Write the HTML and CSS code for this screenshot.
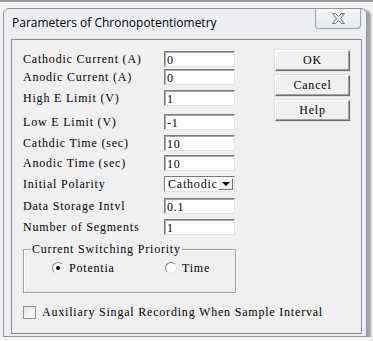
FILE: index.html
```html
<!DOCTYPE html>
<html lang="en">
<head>
  <meta charset="UTF-8">
  <title>Parameters of Chronopotentiometry</title>
  <link rel="stylesheet" href="styles.css">
</head>
<body>
  <div class="window">
    <div class="titlebar">
      <span class="title">Parameters of Chronopotentiometry</span>
      <div class="close">
        <svg width="13" height="11" viewBox="0 0 13 11">
          <polygon points="0.5,0.5 3.5,0.5 6.5,3.5 9.5,0.5 12.5,0.5 8.5,5.5 12.5,10.5 9.5,10.5 6.5,7.5 3.5,10.5 0.5,10.5 4.5,5.5" fill="#f4f5f7" stroke="#6d737b"/>
        </svg>
      </div>
    </div>

    <div class="client">
      <div class="main">
        <div class="form">
          <span class="label">Cathodic Current (A)</span><div class="edit">0</div>
          <span class="label">Anodic Current (A)</span><div class="edit">0</div>
          <span class="label">High E Limit (V)</span><div class="edit">1</div>
          <span class="label">Low E Limit (V)</span><div class="edit">-1</div>
          <span class="label">Cathdic Time (sec)</span><div class="edit">10</div>
          <span class="label">Anodic Time (sec)</span><div class="edit">10</div>
          <span class="label">Initial Polarity</span>
          <div class="combo">
            <span class="combo-text">Cathodic</span>
            <span class="combo-btn"><span class="arrow"></span></span>
          </div>
          <span class="label">Data Storage Intvl</span><div class="edit">0.1</div>
          <span class="label">Number of Segments</span><div class="edit">1</div>
        </div>

        <div class="buttons">
          <div class="button">OK</div>
          <div class="button">Cancel</div>
          <div class="button">Help</div>
        </div>
      </div>

      <fieldset class="group">
        <legend>Current Switching Priority</legend>
        <div class="radios">
          <div class="radio radio-first"><span class="dot checked"></span>Potentia</div>
          <div class="radio"><span class="dot"></span>Time</div>
        </div>
      </fieldset>

      <div class="check">
        <span class="box"></span>
        <span>Auxiliary Singal Recording When Sample Interval</span>
      </div>
    </div>
  </div>
</body>
</html>
```

FILE: styles.css
```css
body {
  margin: 0;
  padding-top: 6px;
  border-top: 2px solid #9c9c9c;
  background: #f3f3f3;
  font-family: "Liberation Serif", serif;
  font-size: 12px;
  letter-spacing: 0.8px;
  color: #000;
}

.window {
  box-sizing: border-box;
  width: 364px;
  height: 329px;
  margin-left: 3px;
  border: 1px solid #8d969f;
  border-radius: 6px 6px 0 0;
  background: #eceef1;
  box-shadow: 4px 2px 2px rgba(60, 70, 80, 0.45);
}

.titlebar {
  display: flex;
  align-items: flex-start;
  height: 30px;
  padding-left: 8px;
}

.title {
  margin-top: 6px;
  font-family: "Open Sans", sans-serif;
  font-size: 12px;
  line-height: 16px;
  letter-spacing: 0;
}

.close {
  display: flex;
  align-items: center;
  justify-content: center;
  box-sizing: border-box;
  width: 46px;
  height: 20px;
  margin-left: auto;
  margin-right: 5px;
  border: 1px solid #9aa2ab;
  border-top: none;
  border-radius: 0 0 4px 4px;
  background: linear-gradient(#f6f7f9, #e6e9ed);
}

.client {
  box-sizing: border-box;
  width: 351px;
  height: 295px;
  margin-left: 7px;
  padding: 11px 11px 0;
  border: 1px solid #8a8a8a;
  background: #f0f0f0;
}

.main {
  display: flex;
  justify-content: space-between;
  align-items: flex-start;
}

.form {
  display: grid;
  grid-template-columns: 141px 71px;
  grid-template-rows: 18px 21px 24px 21px 20px 21px 22px 21px 16px;
}

.label {
  line-height: 16px;
  white-space: nowrap;
}

.edit {
  box-sizing: border-box;
  height: 16px;
  padding: 1px 2px 0;
  line-height: 14px;
  background: #fff;
  border: 1px solid;
  border-color: #7a7a7a #e3e3e3 #e3e3e3 #7a7a7a;
  box-shadow: inset 1px 1px 0 #a8a8a8;
}

.combo {
  display: flex;
  box-sizing: border-box;
  height: 16px;
  padding: 1px;
  background: #fff;
  border: 1px solid;
  border-color: #7a7a7a #e3e3e3 #e3e3e3 #7a7a7a;
}

.combo-text {
  flex: 1;
  padding-left: 2px;
  line-height: 13px;
}

.combo-btn {
  display: flex;
  align-items: center;
  justify-content: center;
  box-sizing: border-box;
  width: 15px;
  background: #f0f0f0;
  border: 1px solid;
  border-color: #fff #6d6d6d #6d6d6d #fff;
}

.arrow {
  width: 0;
  height: 0;
  border-left: 4px solid transparent;
  border-right: 4px solid transparent;
  border-top: 4px solid #000;
}

.buttons {
  display: flex;
  flex-direction: column;
  gap: 4px;
  margin-top: -1px;
}

.button {
  box-sizing: border-box;
  width: 75px;
  height: 21px;
  line-height: 18px;
  text-align: center;
  background: #f0f0f0;
  border: 1px solid;
  border-color: #fff #6d6d6d #6d6d6d #fff;
  box-shadow: inset -1px -1px 0 #a0a0a0, 0 0 0 1px #e3e3e3;
}

.group {
  box-sizing: border-box;
  width: 213px;
  height: 50px;
  margin: 8px 0 0;
  padding: 7px 0 0;
  border: 1px solid #a0a0a0;
  box-shadow: 1px 1px 0 #fff, inset 1px 1px 0 #fff;
}

.group legend {
  margin-left: 7px;
  padding: 0 1px;
  line-height: 12px;
}

.radios {
  display: flex;
  align-items: center;
  padding-left: 28px;
  line-height: 12px;
}

.radio {
  display: flex;
  align-items: center;
  gap: 5px;
}

.radio-first {
  width: 113px;
}

.dot {
  display: flex;
  align-items: center;
  justify-content: center;
  box-sizing: border-box;
  width: 12px;
  height: 12px;
  border-radius: 50%;
  background: #fff;
  border: 1px solid;
  border-color: #808080 #e3e3e3 #e3e3e3 #808080;
}

.dot.checked::after {
  content: "";
  width: 4px;
  height: 4px;
  border-radius: 50%;
  background: #000;
}

.check {
  display: flex;
  align-items: center;
  gap: 6px;
  margin-top: 13px;
  line-height: 13px;
}

.box {
  box-sizing: border-box;
  width: 13px;
  height: 13px;
  background: linear-gradient(135deg, #e6e6e6, #fff);
  border: 1px solid #8f8f8f;
}
```
